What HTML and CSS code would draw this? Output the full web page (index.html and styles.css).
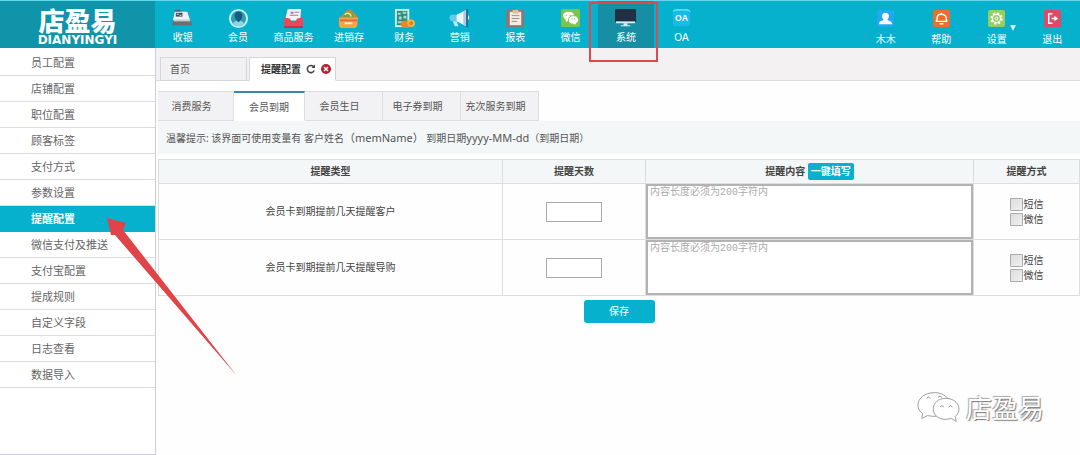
FILE: index.html
```html
<!DOCTYPE html>
<html lang="zh-CN">
<head>
<meta charset="utf-8">
<title>店盈易 - 提醒配置</title>
<link rel="stylesheet" href="styles.css">
</head>
<body>
<header class="header">
  <div class="logo"><span class="logo-cn">店盈易</span><span class="logo-en">DIANYINGYI</span></div>
  <nav class="nav">
    <a class="nav-item" href="#"><svg class="icon" viewBox="0 0 22 22"><path d="M3 2h6v2H3z" fill="#555d63"/><path d="M3 4h13l3 9H1z" fill="#eef2f3"/><path d="M4 5h7v4H4z" fill="#3c4a52"/><path d="M5 6h2v1H5zM8 7h2v1H8z" fill="#dfe"/><path d="M1 13h19l1 5H0z" fill="#6d6e72"/><path d="M2 12h17v2H2z" fill="#c9cdd0"/></svg><span>收银</span></a>
    <a class="nav-item" href="#"><svg class="icon" viewBox="0 0 22 22"><circle cx="11" cy="11" r="9" fill="#2f9dba" stroke="#c5f4fb" stroke-width="2"/><path d="M11 4c3 0 4 2 4 4s-1 4-2 5c0 1 4 1 4 3-3 3-9 3-12 0 0-2 4-2 4-3-1-1-2-3-2-5s1-4 4-4z" fill="#155d78"/><path d="M5 16c1-2 3-2 4-3l2 2 2-2c1 1 3 1 4 3-3 4-9 4-12 0z" fill="#8ed4e2"/></svg><span>会员</span></a>
    <a class="nav-item" href="#"><svg class="icon" viewBox="0 0 22 22"><path d="M5 1h14l-1 12H2z" fill="#f4f4f8"/><path d="M8 4h3v2H8zM12 4h5v1h-5zM7 7h9v1H7z" fill="#8b83a8"/><path d="M1 10l6 1 2 3h4l2-3 6-1v10H1z" fill="#e6495a"/><path d="M1 19h20v2H1z" fill="#bd3648"/></svg><span>商品服务</span></a>
    <a class="nav-item" href="#"><svg class="icon" viewBox="0 0 22 22"><path d="M2 10l7-7 3-2 6 5 3 5z" fill="#c98b34"/><path d="M6 8l5-5 2 4 3-3v7H6z" fill="#72a247"/><path d="M7 7c3-3 6-1 7 2" stroke="#f7e38b" fill="none" stroke-width="1.5"/><path d="M1 10h20l-1 9-2 2H3l-2-2z" fill="#f3a545"/><path d="M2 12h18v2H2z" fill="#e96645"/><path d="M7 15h8v2H7z" fill="#fff0bb"/></svg><span>进销存</span></a>
    <a class="nav-item" href="#"><svg class="icon" viewBox="0 0 22 22"><path d="M1 1h15v19H1z" fill="#c8f4ed"/><path d="M3 3h11v15H3z" fill="#34887f"/><path d="M4 5h3v2H4zM9 4h4v2H9zM5 9h3v3H5zM10 8h3v3h-3zM4 14h5v2H4z" fill="#9fe0cd"/><ellipse cx="12" cy="17" rx="5" ry="4" fill="#e5892d"/><circle cx="18" cy="16" r="4" fill="#f8b43a"/><circle cx="18" cy="16" r="2" fill="#d98328"/></svg><span>财务</span></a>
    <a class="nav-item" href="#"><svg class="icon" viewBox="0 0 22 22"><path d="M2 7h7v7H2c-2-2-2-5 0-7z" fill="#65c9ea"/><path d="M4 14h4l2 5H6z" fill="#b9e6f3"/><path d="M8 7l10-5v17L8 14z" fill="#edf7fb"/><path d="M15 4l3-2v17l-3-2z" fill="#b7c9d8"/><path d="M18 1h2v19h-2z" fill="#176ea0"/><path d="M20 8h1v4h-1z" fill="#fff"/></svg><span>营销</span></a>
    <a class="nav-item" href="#"><svg class="icon" viewBox="0 0 22 22"><rect x="1" y="2" width="19" height="18" rx="2" fill="#8b7770"/><path d="M5 4h12v14H5z" fill="#f1eee7"/><path d="M8 2h6v4H8z" fill="#f0bd87"/><path d="M7 8h8M7 11h8M7 14h6" stroke="#a58578"/></svg><span>报表</span></a>
    <a class="nav-item" href="#"><svg class="icon" viewBox="0 0 22 22"><rect x="1" y="1" width="20" height="19" rx="2" fill="#79c748"/><path d="M9 4c8 0 8 9 0 9l-3 2v-3C1 9 3 4 9 4z" fill="#fff"/><path d="M14 8c6 0 7 6 3 8v2l-3-1c-7 0-7-9 0-9z" fill="#fff" stroke="#79c748"/><path d="M6 7h1v1H6zM10 7h1v1h-1zM12 11h1v1h-1zM15 11h1v1h-1z" fill="#579d32"/></svg><span>微信</span></a>
    <a class="nav-item nav-active" href="#"><svg class="icon" viewBox="0 0 22 22"><rect x="0" y="1" width="22" height="14" rx="1" fill="#203044"/><path d="M1 14h20v2H1z" fill="#d5edf1"/><path d="M9 16h4v2h3v1H6v-1h3z" fill="#d5edf1"/></svg><span>系统</span><i class="mark"></i></a>
    <a class="nav-item" href="#"><svg class="icon" viewBox="0 0 22 22"><rect x="2" y="1" width="18" height="18" rx="3" fill="#13bde7"/><path d="M3 4V3q0-1 2-1h13l2 2" stroke="#a3ecfa" fill="none"/><text class="oa-text" x="11" y="14">OA</text></svg><span>OA</span></a>
  </nav>
  <nav class="nav user-nav">
    <a class="nav-item" href="#"><svg class="icon" viewBox="0 0 18 18"><rect width="18" height="18" rx="2" fill="#20a9ef"/><path d="M9 3c5 0 4 6 2 7 1 2 4 1 5 4v1H2v-1c1-3 4-2 5-4-2-1-3-7 2-7z" fill="#fff"/></svg><span>木木</span></a>
    <a class="nav-item" href="#"><svg class="icon" viewBox="0 0 18 18"><rect width="18" height="18" rx="2" fill="#e96f2d"/><path d="M3 12c2-1 1-4 2-6s6-2 8 0 0 5 2 6zM7 14.500h4M9 3v1" stroke="#fff" stroke-width="1.5" fill="none"/></svg><span>帮助</span></a>
    <a class="nav-item" href="#"><svg class="icon" viewBox="0 0 18 18"><rect width="18" height="18" rx="2" fill="#94cf62"/><circle cx="9" cy="9" r="5.5" fill="none" stroke="#fff" stroke-width="2" stroke-dasharray="2.3 2"/><circle cx="9" cy="9" r="4.3" fill="none" stroke="#fff" stroke-width="1.3"/><circle cx="9" cy="9" r="1.5" fill="none" stroke="#fff"/></svg><span>设置</span><i class="caret"></i></a>
    <a class="nav-item" href="#"><svg class="icon" viewBox="0 0 18 18"><rect width="18" height="18" rx="2" fill="#df4967"/><path d="M9 4H5v10h4M8 9h5" stroke="#fff" stroke-width="1.6" fill="none"/><path d="M11 6l4 3-4 3z" fill="#fff"/></svg><span>退出</span></a>
  </nav>
</header>
<div class="layout">
  <aside class="sidebar">
    <a href="#">员工配置</a><a href="#">店铺配置</a><a href="#">职位配置</a><a href="#">顾客标签</a><a href="#">支付方式</a><a href="#">参数设置</a><a href="#" class="current">提醒配置</a><a href="#">微信支付及推送</a><a href="#">支付宝配置</a><a href="#">提成规则</a><a href="#">自定义字段</a><a href="#">日志查看</a><a href="#">数据导入</a>
  </aside>
  <main class="main">
    <div class="tabs">
      <a class="tab" href="#">首页</a>
      <div class="tab tab-open"><a href="#">提醒配置</a>
        <button class="tab-btn" aria-label="刷新"><svg viewBox="0 0 10 10"><path d="M8.2 6.5A3.6 3.6 0 1 1 7.5 2.5" fill="none" stroke="#444" stroke-width="1.5"/><path d="M5.5 4H9V.5z" fill="#444"/></svg></button>
        <button class="tab-btn" aria-label="关闭"><svg viewBox="0 0 10 10"><circle cx="5" cy="5" r="5" fill="#b81f31"/><path d="M3 3l4 4M7 3L3 7" stroke="#fff" stroke-width="1.5"/></svg></button>
      </div>
    </div>
    <div class="subtabs">
      <a href="#">消费服务</a><a href="#" class="sub-active">会员到期</a><a href="#">会员生日</a><a href="#">电子券到期</a><a href="#">充次服务到期</a>
    </div>
    <p class="hint">温馨提示: 该界面可使用变量有 客户姓名<span class="var" lang="zh-TW">（memName）</span> 到期日期<span class="var">yyyy-MM-dd</span><span lang="zh-TW" class="paren">（</span>到期日期<span lang="zh-TW" class="paren">）</span></p>
    <form class="form">
      <table class="grid">
        <colgroup><col><col class="col-days"><col class="col-content"><col class="col-way"></colgroup>
        <thead><tr><th>提醒类型</th><th>提醒天数</th><th>提醒内容 <button type="button" class="fill">一键填写</button></th><th>提醒方式</th></tr></thead>
        <tbody>
          <tr><td><label for="d1">会员卡到期提前几天提醒客户</label></td><td><input class="days" id="d1" type="text"></td><td class="area"><textarea aria-label="提醒客户内容" placeholder="内容长度必须为200字符内"></textarea></td><td><div class="ways"><label><input type="checkbox">短信</label><label><input type="checkbox">微信</label></div></td></tr>
          <tr><td><label for="d2">会员卡到期提前几天提醒导购</label></td><td><input class="days" id="d2" type="text"></td><td class="area"><textarea aria-label="提醒导购内容" placeholder="内容长度必须为200字符内"></textarea></td><td><div class="ways"><label><input type="checkbox">短信</label><label><input type="checkbox">微信</label></div></td></tr>
        </tbody>
      </table>
      <button type="button" class="save">保存</button>
    </form>
  </main>
</div>
<svg class="arrow" viewBox="0 0 132 162"><path d="M1 1l19 5-3 7 114 146L9 18l-4 0z" fill="#e04448"/></svg>
<div class="watermark">
  <svg viewBox="0 0 46 34"><g fill="#fff" stroke="#999" stroke-width="1"><path d="M18 2C8 2 1 8 1 15c0 4 2 7 5 9l-1 5 6-3c14 3 23-3 23-11S28 2 18 2z"/><path d="M30 8c-8 0-13 5-13 11s5 11 13 11l6-1 5 3-1-5c8-7 3-19-10-19z"/></g><path d="M10 8q2-3 4 0M22 7q2-3 4 0M24 17q2-3 4 0M33 17q2-3 4 0" fill="none" stroke="#888"/></svg>
  <span>店盈易</span>
</div>
</body>
</html>
```
FILE: styles.css
```css
* { box-sizing: border-box; }
body {
  margin: 0;
  min-height: 100vh;
  display: flex;
  flex-direction: column;
  position: relative;
  font: 10px/15px "Noto Sans", "Noto Sans CJK SC", sans-serif;
  color: #555;
  background: #fefefe;
}
a { color: inherit; text-decoration: none; }
button, input, textarea { font: inherit; margin: 0; }

.header {
  display: flex;
  height: 48px;
  background: #06b1cd;
  border-top: 1px solid #5fd9ea;
}
.logo {
  width: 155px;
  background: #1094a9;
  color: #fff;
  display: flex;
  flex-direction: column;
  align-items: center;
  gap: 1px;
  padding-top: 5px;
}
.logo-cn { font: 900 26px/27px "Noto Sans CJK SC", sans-serif; }
.logo-en { font: bold 12px/12px "DejaVu Sans", sans-serif; }
.nav { display: flex; flex: 0 1 554px; }
.user-nav { flex-basis: 222px; margin-left: auto; }
.nav-item {
  flex: 1;
  position: relative;
  display: flex;
  flex-direction: column;
  align-items: center;
  padding-top: 7px;
  color: #fff;
  white-space: nowrap;
  font-family: "Liberation Sans", "Noto Sans CJK SC", sans-serif;
}
.nav-item .icon { width: 21px; height: 21px; margin-bottom: 1px; }
.user-nav .nav-item { padding-top: 9px; }
.user-nav .icon { width: 17px; height: 17px; margin-bottom: 5px; }
.nav-active { background: #168fa5; }
.oa-text { font: bold 9px "Liberation Sans", sans-serif; fill: #fff; text-anchor: middle; }
.mark {
  position: absolute;
  inset: 1px -4px -14px -9px;
  border: 2px solid #e0484d;
  z-index: 2;
}
.caret {
  position: absolute;
  top: 24px;
  left: 41px;
  border: 3px solid transparent;
  border-top: 6px solid #c9f6fc;
  border-bottom: 0;
}

.layout { display: flex; flex: 1; }
.sidebar {
  width: 156px;
  border-right: 1px solid #ccd;
  border-bottom: 1px solid #ccd;
  background: #fff;
  padding-top: 2px;
}
.sidebar a {
  display: block;
  height: 26px;
  padding-left: 31px;
  border-bottom: 1px solid #dcdce4;
  font-size: 11px;
  line-height: 25px;
  color: #666;
}
.sidebar .current { background: #06b1cd; border-color: #06b1cd; color: #fff; font-weight: bold; }

.main { flex: 1; min-width: 0; }
.tabs {
  display: flex;
  gap: 2px;
  height: 33px;
  padding: 9px 0 0 4px;
  background: #f3f1f1;
  border-bottom: 1px solid #ddd;
}
.tab {
  width: 87px;
  height: 24px;
  padding-left: 9px;
  line-height: 22px;
  background: #f1f0f2;
  border: 1px solid #d5d5da;
}
.tab-open {
  display: flex;
  align-items: center;
  gap: 5px;
  padding-left: 11px;
  background: #fff;
  border-bottom-color: #fff;
  font-weight: bold;
  color: #333;
}
.tab-btn { width: 10px; height: 10px; padding: 0; border: 0; background: none; }
.tab-btn svg { display: block; width: 10px; height: 10px; }

.subtabs { display: flex; padding: 10px 0 0 2px; }
.subtabs a {
  width: 78px;
  height: 30px;
  padding-right: 8px;
  line-height: 29px;
  text-align: center;
  background: #f2f1f3;
  border: 1px solid #ddd;
  border-left: 0;
}
.subtabs a:first-child { width: 76px; }
.subtabs .sub-active { width: 71px; padding: 0; background: #fff; border-top: 2px solid #3a87ad; border-bottom-color: #fff; }
.hint { margin: 0 0 5px 2px; padding: 9px 8px 8px; background: #f4f7f8; }
.var { font-size: 11px; font-family: "Noto Sans", "Noto Sans CJK TC", sans-serif; }
.paren { font-family: "Noto Sans CJK TC", sans-serif; }
.form { margin-left: 2px; }
.grid {
  width: 100%;
  table-layout: fixed;
  border-collapse: collapse;
  text-align: center;
  color: #444;
}
.col-days { width: 143px; }
.col-content { width: 328px; }
.col-way { width: 106px; }
.grid th, .grid td { padding: 0; border: 1px solid #ddd; }
.grid th { height: 24px; background: #f4f7f8; }
.grid td { height: 56px; }
.fill {
  height: 17px;
  padding: 0 3px;
  border: 0;
  border-radius: 2px;
  background: #06b1cd;
  color: #fff;
}
.days { width: 56px; height: 20px; border: 1px solid #aaa; background: #fff; }
.area textarea {
  display: block;
  width: 100%;
  height: 55px;
  padding: 0 2px;
  border: 2px solid #b3b3b3;
  border-radius: 0;
  resize: none;
  background: #fff;
  font-family: "Liberation Mono", "Noto Sans CJK SC", monospace;
  line-height: 13px;
}
.area textarea::placeholder { color: #aaa; }
.ways { display: flex; flex-direction: column; align-items: center; }
.ways label { display: flex; align-items: center; gap: 1px; }
.ways input {
  appearance: none;
  width: 13px;
  height: 13px;
  border: 1px solid #aaa;
  border-radius: 1px;
  background: linear-gradient(135deg, #ddd, #f0f0f0);
}
.save {
  display: block;
  width: 71px;
  height: 23px;
  margin: 4px auto 0;
  border: 0;
  border-radius: 3px;
  background: #06b1cd;
  color: #fff;
}

.arrow { position: absolute; left: 106px; top: 217px; width: 132px; height: 162px; }
.watermark {
  position: absolute;
  right: 36px;
  bottom: 31px;
  display: flex;
  align-items: center;
  gap: 5px;
}
.watermark svg { width: 44px; height: 34px; }
.watermark span {
  font: 26px/34px "Noto Sans CJK SC", sans-serif;
  color: #fff;
  text-shadow: 1px 1px 1px #777, -1px -1px 1px #aaa;
}
```
